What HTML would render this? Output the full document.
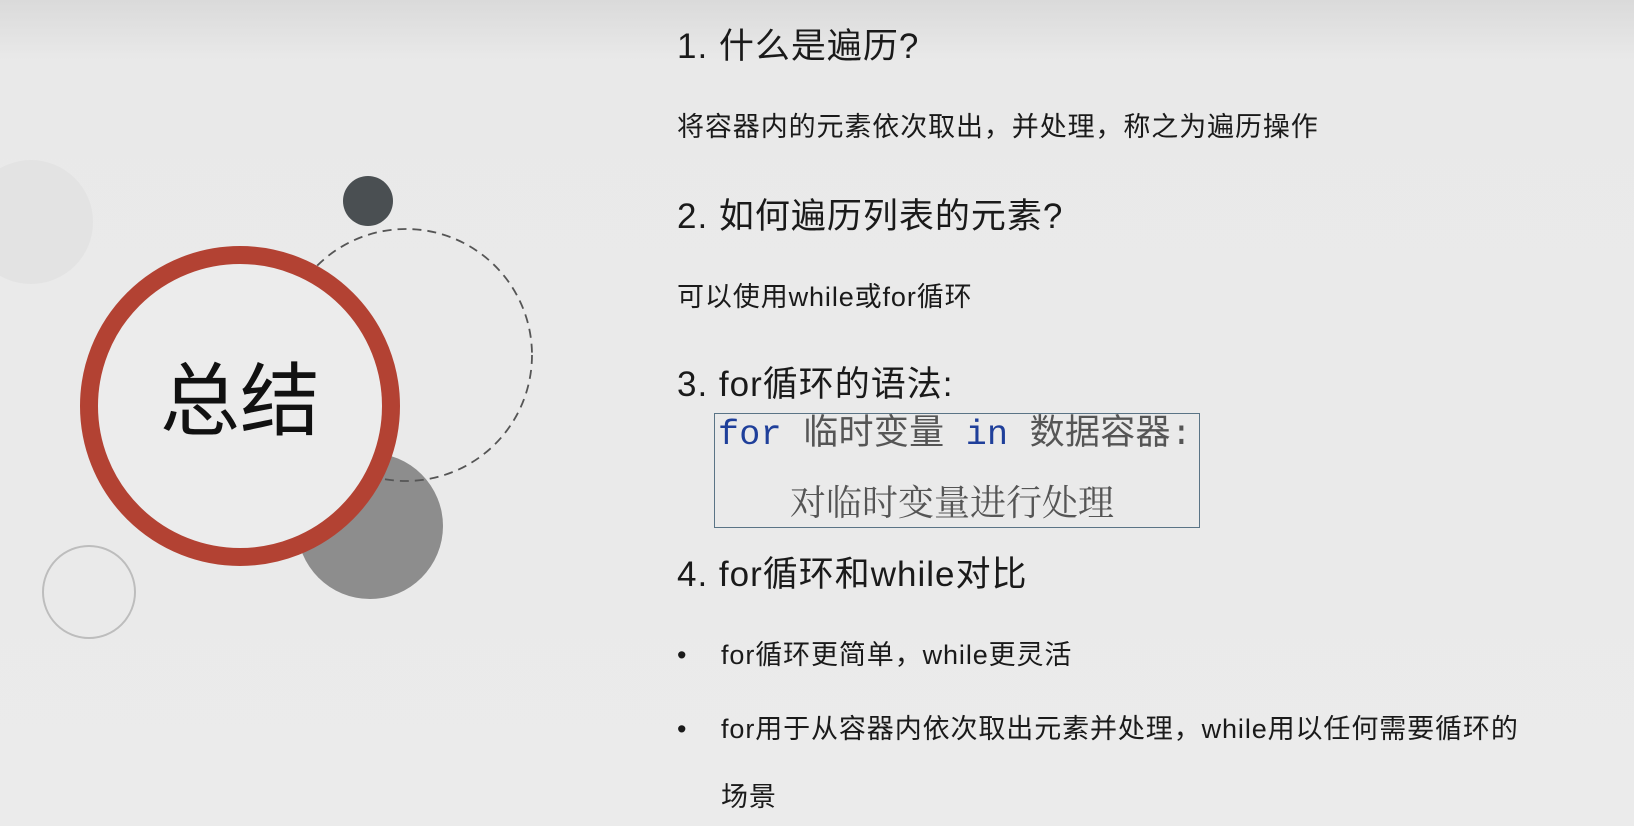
<!DOCTYPE html>
<html><head><meta charset="utf-8"><style>
body{margin:0;width:1634px;height:826px;overflow:hidden;background:linear-gradient(#dadada 0,#e9e9e9 60px,#ebebeb 100%);font-family:"Liberation Sans","Noto Sans CJK SC",sans-serif;color:#1a1a1a;position:relative}
.t{position:absolute;white-space:nowrap;line-height:1}
.h{font-size:35px;left:677px;letter-spacing:1px}
.p{font-size:27px;letter-spacing:0.9px}
</style></head><body>
<svg width="1634" height="826" style="position:absolute;left:0;top:0">
<circle cx="31" cy="222" r="62" fill="#e3e3e3"/>
<circle cx="89" cy="592" r="46" fill="none" stroke="#bdbdbd" stroke-width="2"/>
<circle cx="370" cy="526" r="73" fill="#8d8d8d"/>
<circle cx="406" cy="355" r="126" fill="none" stroke="#555" stroke-width="1.8" stroke-dasharray="9 6"/>
<circle cx="368" cy="201" r="25" fill="#4a4f52"/>
<circle cx="240" cy="406" r="151" fill="#ececec" stroke="#b34233" stroke-width="18"/>
</svg>
<div class="t" style="left:160px;top:362px;font-size:80px;color:#111">总结</div>
<div class="t h" style="top:29px">1. 什么是遍历?</div>
<div class="t p" style="left:677px;top:114px">将容器内的元素依次取出，并处理，称之为遍历操作</div>
<div class="t h" style="top:199px">2. 如何遍历列表的元素?</div>
<div class="t p" style="left:677px;top:284px">可以使用while或for循环</div>
<div class="t h" style="top:367px">3. for循环的语法:</div>
<div style="position:absolute;left:714px;top:413px;width:486px;height:115px;border:1.5px solid #5a7486;box-sizing:border-box"></div>
<div class="t" style="left:718px;top:418px;font-size:35px;font-family:'Liberation Mono','Noto Sans CJK SC',monospace;color:#555;letter-spacing:0.3px"><span style="color:#1f3f9a">for</span> 临时变量 <span style="color:#1f3f9a">in</span> 数据容器:</div>
<div class="t" style="left:790px;top:485px;font-size:36px;color:#555;font-family:'Liberation Serif','Noto Serif CJK SC',serif">对临时变量进行处理</div>
<div class="t h" style="top:557px">4. for循环和while对比</div>
<div class="t p" style="left:677px;top:642px">•</div>
<div class="t p" style="left:721px;top:642px">for循环更简单，while更灵活</div>
<div class="t p" style="left:677px;top:716px">•</div>
<div class="t p" style="left:721px;top:716px">for用于从容器内依次取出元素并处理，while用以任何需要循环的</div>
<div class="t p" style="left:721px;top:784px">场景</div>
</body></html>
